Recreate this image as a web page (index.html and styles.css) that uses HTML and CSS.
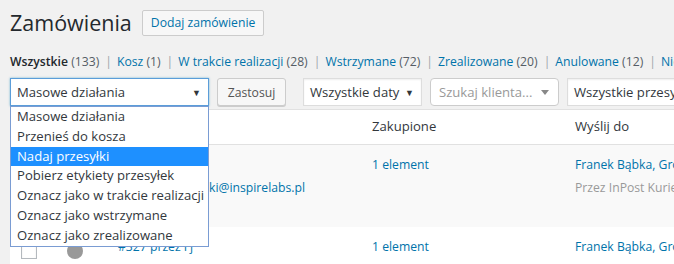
FILE: index.html
```html
<!DOCTYPE html>
<html lang="pl">
<head>
    <meta charset="UTF-8">
    <meta name="viewport" content="width=device-width, initial-scale=1.0">
    <title>Zamówienia</title>
    <link rel="stylesheet" href="styles.css">
</head>
<body>
    <div class="wrap">
        <div class="heading">
            <h1 class="page-title">Zamówienia</h1>
            <a href="#" class="title-action">Dodaj zamówienie</a>
        </div>

        <ul class="subsubsub">
            <li><a href="#" class="current">Wszystkie <span class="count">(133)</span></a><span class="sep">|</span></li>
            <li><a href="#">Kosz <span class="count">(1)</span></a><span class="sep">|</span></li>
            <li><a href="#">W trakcie realizacji <span class="count">(28)</span></a><span class="sep">|</span></li>
            <li><a href="#">Wstrzymane <span class="count">(72)</span></a><span class="sep">|</span></li>
            <li><a href="#">Zrealizowane <span class="count">(20)</span></a><span class="sep">|</span></li>
            <li><a href="#">Anulowane <span class="count">(12)</span></a><span class="sep">|</span></li>
            <li><a href="#">Nieudane <span class="count">(3)</span></a></li>
        </ul>

        <div class="tablenav">
            <div class="bulk">
                <div class="select select-open">Masowe działania <span class="arrow">▼</span></div>
                <ul class="dropdown">
                    <li>Masowe działania</li>
                    <li>Przenieś do kosza</li>
                    <li class="active">Nadaj przesyłki</li>
                    <li>Pobierz etykiety przesyłek</li>
                    <li>Oznacz jako w trakcie realizacji</li>
                    <li>Oznacz jako wstrzymane</li>
                    <li>Oznacz jako zrealizowane</li>
                </ul>
            </div>
            <button class="button">Zastosuj</button>
            <div class="select select-dates">Wszystkie daty <span class="arrow">▼</span></div>
            <div class="select2">Szukaj klienta... <span class="caret"></span></div>
            <div class="select select-shipping">Wszystkie przesyłki <span class="arrow">▼</span></div>
        </div>

        <table class="orders">
            <thead>
                <tr>
                    <th class="col-check"></th>
                    <th class="col-status"></th>
                    <th class="col-order"></th>
                    <th class="col-items">Zakupione</th>
                    <th class="col-ship">Wyślij do</th>
                </tr>
            </thead>
            <tbody>
                <tr class="alt">
                    <td class="col-check"><span class="checkbox"></span></td>
                    <td class="col-status"><span class="dot"></span></td>
                    <td class="col-order">
                        <a href="#">#328 przez Fj</a>
                        <div class="email"><a href="#">franek.bobkowski@inspirelabs.pl</a></div>
                    </td>
                    <td class="col-items"><a href="#">1 element</a></td>
                    <td class="col-ship">
                        <a href="#">Franek Bąbka, Grodzka 12, Kraków</a>
                        <div class="method">Przez InPost Kurier</div>
                    </td>
                </tr>
                <tr>
                    <td class="col-check"><span class="checkbox"></span></td>
                    <td class="col-status"><span class="dot"></span></td>
                    <td class="col-order">
                        <a href="#">#327 przez Fj</a>
                        <div class="email"><a href="#">franek.bobkowski@inspirelabs.pl</a></div>
                    </td>
                    <td class="col-items"><a href="#">1 element</a></td>
                    <td class="col-ship">
                        <a href="#">Franek Bąbka, Grodzka 12, Kraków</a>
                        <div class="method">Przez InPost Kurier</div>
                    </td>
                </tr>
            </tbody>
        </table>
    </div>
</body>
</html>
```

FILE: styles.css
```css
* {
    box-sizing: border-box;
}

body {
    margin: 0;
    background-color: #f1f1f1;
    color: #444;
    font-family: "Open Sans", "Noto Sans", sans-serif;
    font-size: 12.2px;
    overflow: hidden;
}

a {
    color: #0073aa;
    text-decoration: none;
}

.wrap {
    width: 1000px;
    padding: 10px 0 0 10px;
}

.heading {
    display: flex;
    align-items: center;
    gap: 10px;
    height: 26px;
}

.page-title {
    margin: 0;
    font-size: 21.5px;
    font-weight: 400;
    color: #23282d;
    line-height: 26px;
}

.title-action {
    display: inline-block;
    height: 26px;
    line-height: 24px;
    padding: 0 8px;
    border: 1px solid #ccc;
    border-radius: 2px;
    background: #f7f7f7;
}

.subsubsub {
    display: flex;
    list-style: none;
    margin: 16px 0 0;
    padding: 0;
    white-space: nowrap;
    line-height: 20px;
}

.subsubsub .sep {
    padding: 0 5px 0 6px;
    color: #a0a5aa;
}

.subsubsub a.current {
    color: #23282d;
    font-weight: 600;
}

.subsubsub .count {
    color: #555d66;
    font-weight: 400;
}

.tablenav {
    display: flex;
    align-items: center;
    gap: 8px;
    margin-top: 6px;
    height: 28px;
}

.bulk {
    position: relative;
}

.select {
    display: flex;
    align-items: center;
    justify-content: space-between;
    height: 28px;
    padding: 0 7px 0 6px;
    border: 1px solid #ddd;
    background: #fff;
    color: #32373c;
    font-size: 13.1px;
    box-shadow: inset 0 1px 2px rgba(0, 0, 0, 0.07);
    white-space: nowrap;
}

.select .arrow {
    font-size: 9px;
    color: #32373c;
}

.select-open {
    width: 199px;
    border-color: #5b9dd9;
    box-shadow: 0 0 2px rgba(30, 140, 190, 0.6);
}

.select-dates {
    width: 119px;
    margin-left: 9px;
}

.select-shipping {
    width: 180px;
}

.select2 {
    display: flex;
    align-items: center;
    justify-content: space-between;
    width: 129px;
    height: 28px;
    padding: 0 9px 0 8px;
    border: 1px solid #ccc;
    border-radius: 4px;
    background: #fff;
    color: #999;
    font-size: 13.1px;
    white-space: nowrap;
}

.caret {
    width: 0;
    height: 0;
    border-left: 4px solid transparent;
    border-right: 4px solid transparent;
    border-top: 5px solid #888;
}

.button {
    width: 69px;
    height: 28px;
    padding: 0;
    border: 1px solid #ccc;
    border-radius: 3px;
    background: #f7f7f7;
    box-shadow: 0 1px 0 #ccc;
    color: #555;
    font-family: inherit;
    font-size: 12.2px;
}

.dropdown {
    position: absolute;
    top: 28px;
    left: 0;
    z-index: 2;
    width: 199px;
    margin: 0;
    padding: 0;
    list-style: none;
    background: #fff;
    border: 1px solid #7a9cd3;
    color: #32373c;
    font-size: 13.1px;
}

.dropdown li {
    height: 19.8px;
    line-height: 19.8px;
    padding: 0 6px;
    white-space: nowrap;
}

.dropdown li.active {
    background: #1e90ff;
    color: #fff;
}

.orders {
    margin-top: 3px;
    border-collapse: collapse;
    border-top: 1px solid #e1e1e1;
    background: #fff;
    table-layout: fixed;
    width: 990px;
}

.orders th {
    height: 35px;
    padding: 0 10px 2px;
    text-align: left;
    font-size: 13.1px;
    font-weight: 400;
    color: #32373c;
    border-bottom: 1px solid #e1e1e1;
}

.orders td {
    height: 82px;
    padding: 8px 10px 9px;
    vertical-align: top;
    line-height: 23px;
}

.orders tr.alt td {
    background: #f9f9f9;
}

.col-check {
    width: 44px;
}

.col-status {
    width: 54px;
}

.col-order {
    width: 254px;
}

.col-items {
    width: 203px;
}

.checkbox {
    display: block;
    width: 16px;
    height: 16px;
    margin: 8px 0 0 1px;
    border: 1px solid #b4b9be;
    background: #fff;
    box-shadow: inset 0 1px 2px rgba(0, 0, 0, 0.1);
}

.dot {
    display: block;
    width: 16px;
    height: 16px;
    margin: 8px 0 0 3px;
    border-radius: 50%;
    background: #999;
}

.method {
    color: #999;
}
```
